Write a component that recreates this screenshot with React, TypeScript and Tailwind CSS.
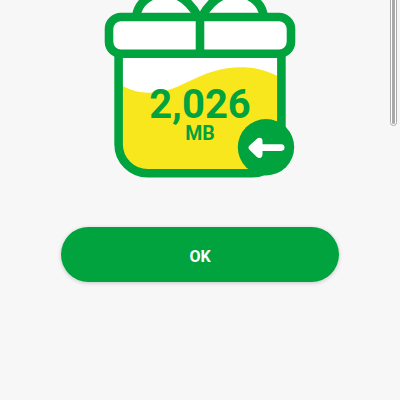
const VERDE = '#00a33e';
const AMARELO = '#f9e71e';

function GiftBox() {
  return (
    <svg className="absolute inset-0" width="400" height="190" viewBox="0 0 400 190" fill="none">
      <path d="M118.6 50V144.3a29 29 0 0 0 29 29H252.4a29 29 0 0 0 29-29V50Z" fill="#fff" />
      <path
        d="M119 83.5C127 89 137 92.9 150 92.7C185 92 197 67.2 243 67.2C257 67.2 269 71.5 281.4 78V144.3a29 29 0 0 1-29 29H147.6a29 29 0 0 1-29-29Z"
        fill={AMARELO}
      />
      <path d="M118.6 50V144.3a29 29 0 0 0 29 29H252.4a29 29 0 0 0 29-29V50" stroke={VERDE} strokeWidth="8.6" />
      <path
        d="M136.2 17C137.5 3 150-7 165-7C179-7 190 2 198.5 17M263.8 17C262.5 3 250-7 235-7C221-7 210 2 201.5 17"
        fill="#fff"
        stroke={VERDE}
        strokeWidth="8.6"
      />
      <rect x="109" y="17" width="182" height="36.7" rx="12" fill="#fff" stroke={VERDE} strokeWidth="8.6" />
      <path d="M200 17V54" stroke={VERDE} strokeWidth="8.6" />
    </svg>
  );
}

function ArrowBadge() {
  return (
    <svg className="absolute left-[237px] top-[118px]" width="58" height="58" viewBox="237 118 58 58" fill="none">
      <circle cx="266" cy="147.3" r="28.2" fill={VERDE} />
      <path
        d="M259.2 141.1L252 147.6L259.2 154.6V141.1ZM254 147.6H281.2"
        stroke="#fff"
        fill="#fff"
        strokeWidth="6.6"
        strokeLinecap="round"
        strokeLinejoin="round"
      />
    </svg>
  );
}

export default function App() {
  return (
    <main className="relative flex h-screen w-full flex-col items-center overflow-hidden bg-[#f7f7f7] font-['Roboto',sans-serif]">
      <section className="relative h-[226px] w-[400px] shrink-0">
        <GiftBox />
        <div className="relative pt-[84px] text-center font-bold text-[#00a33e]">
          <p className="text-[40px] leading-[41px]">2,026</p>
          <p className="text-[19.5px] leading-[17px]">MB</p>
        </div>
        <ArrowBadge />
      </section>
      <button
        type="button"
        className="mt-[0.5px] h-[55.5px] w-[278px] shrink-0 rounded-full bg-[#00a33e] pt-[5px] text-base font-bold text-white shadow-[0_1px_4px_rgba(0,0,0,0.2)]"
      >
        OK
      </button>
      <div className="absolute -top-4 right-[3px] h-[142px] w-[7px] rounded-full border border-[#aaa] bg-white p-px">
        <div className="mx-auto h-full w-[3px] rounded-full bg-[#aaa]" />
      </div>
    </main>
  );
}
